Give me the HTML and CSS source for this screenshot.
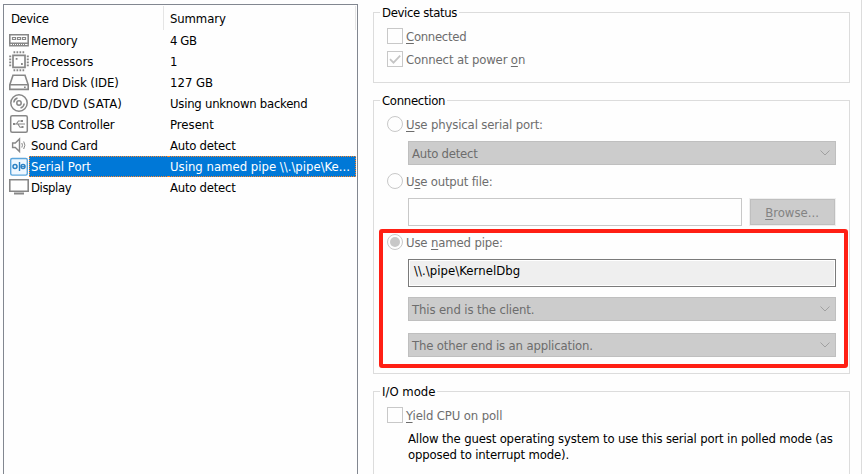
FILE: index.html
```html
<!DOCTYPE html>
<html lang="en">
<head>
<meta charset="utf-8">
<title>Virtual Machine Settings</title>
<link rel="stylesheet" href="styles.css">
</head>
<body>
<main class="dialog">
  <section class="devices">
    <div class="head"><span class="col-device tight-4">Device</span><span class="col-summary tight-1">Summary</span></div>
    <div class="row">
      <svg class="icon" viewBox="0 0 20 21" fill="none" stroke="#878787"><path d="M.8 4.8h18.4v8.4H.8z" stroke-width="1.6"/><path d="M3.5 7.5h3v2h-3zM8.5 7.5h3v2h-3zM13.5 7.5h3v2h-3z" stroke-width="1.2"/><path d="M.8 13v2.8h18.4V13" stroke-width="1.4"/><path d="M3 14.3h14" stroke-dasharray="1 1" stroke-width="1.6"/></svg>
      <span class="name tight-2">Memory</span><span class="summary tight-4">4 GB</span></div>
    <div class="row">
      <svg class="icon" viewBox="0 0 20 21" fill="none" stroke="#878787"><path d="M4 4.3h12v12H4z" stroke-width="1.7"/><path d="M4.5 1.2h11.5M4.5 19.2h11.5" stroke-width="2" stroke-dasharray="1.7 1.3"/><path d="M1.2 4.5v11.5M18.8 4.5v11.5" stroke-width="2" stroke-dasharray="1.7 1.3"/><path d="M6.7 7.8h1.8M12 13h1.8" stroke-width="1.8"/></svg>
      <span class="name">Processors</span><span class="summary">1</span></div>
    <div class="row">
      <svg class="icon" viewBox="0 0 20 21" fill="none" stroke="#878787" stroke-width="1.6"><path d="M.8 12.8 4 3.3h12l3.2 9.5v4.6H.8zM.8 12.8h18.4"/><path d="M15 15.2h1.7"/></svg>
      <span class="name tight-1">Hard Disk (IDE)</span><span class="summary">127 GB</span></div>
    <div class="row">
      <svg class="icon" viewBox="0 0 20 21" fill="none" stroke="#878787" stroke-width="1.5"><circle cx="10" cy="10" r="8.2"/><circle cx="10" cy="10" r="2.2"/><path d="M4.8 9.5A5.2 5.2 0 0 1 8.5 5M15.2 10.5a5.2 5.2 0 0 1-3.7 4.5"/></svg>
      <span class="name loose">CD/DVD (SATA)</span><span class="summary tight-25">Using unknown backend</span></div>
    <div class="row">
      <svg class="icon" viewBox="0 0 20 21" fill="none" stroke="#878787"><rect x="1.7" y="1.7" width="16.6" height="16.6" rx="1.5" stroke-width="1.5"/><path d="M5 10h11M7.5 9.8 9.5 7h3M9 10.2l2 3h2" stroke-width="1.1"/><path d="M4 9h2v2H4zM12 6h2v2h-2zM12.5 12h2v2h-2z" fill="#878787" stroke="none"/></svg>
      <span class="name tight-1">USB Controller</span><span class="summary">Present</span></div>
    <div class="row">
      <svg class="icon" viewBox="0 0 20 21" fill="none" stroke="#878787"><path d="M3.6 8h2.7l4.2-4v12.5l-4.2-4H3.6z" stroke-width="1.4"/><path d="M12.8 8q1.3 2.3 0 4.5M14.7 6.5q2.4 3.7 0 7.5"/></svg>
      <span class="name tight-1">Sound Card</span><span class="summary tight-25">Auto detect</span></div>
    <div class="row selected">
      <svg class="icon" viewBox="0 0 20 21" fill="none" stroke="#2c82c4"><rect x="1.7" y="2.5" width="16.6" height="16.6" rx="1.5" fill="#eef7ff" stroke="#5ca6dc" stroke-width="1.4"/><circle cx="6" cy="10.5" r="2" stroke-width="1.5"/><path d="M10.5 6v9" stroke-width="1.4"/><circle cx="14" cy="10.5" r="2" stroke-width="1.5"/><path d="M12 10.6h4"/></svg>
      <span class="name">Serial Port</span><span class="summary">Using named pipe \\.\pipe\Ke...</span></div>
    <div class="row">
      <svg class="icon" viewBox="0 0 20 21" fill="none" stroke="#878787" stroke-width="1.6"><path d="M.8 2.8h18.4v11.4H.8z"/><path d="M5 16.5h10" stroke-width="2"/></svg>
      <span class="name tight-4">Display</span><span class="summary tight-25">Auto detect</span></div>
  </section>

  <section class="settings">
    <div class="group status">
      <h2 class="tight-35">Device status</h2>
      <div class="option"><i class="box"></i><span class="tight-3"><u>C</u>onnected</span></div>
      <div class="option"><i class="box"><svg viewBox="0 0 14 14"><path d="M2 7.2 5.5 10.7 12.2 3.6" fill="none" stroke="#c4c4c4" stroke-width="1.7"/></svg></i><span class="tight-15">Connect at power <u>o</u>n</span></div>
    </div>
    <div class="group connection">
      <h2 class="tight-3">Connection</h2>
      <div class="option"><i class="radio"></i><span class="tight-15"><u>U</u>se physical serial port:</span></div>
      <div class="combo physical"><span class="tight-25">Auto detect</span><svg viewBox="0 0 10 6"><path d="M.5.5 5 5 9.5.5"/></svg></div>
      <div class="option file"><i class="radio"></i><span class="tight-2">U<u>s</u>e output file:</span></div>
      <div class="file-line"><div class="input"></div><div class="browse"><span><u>B</u>rowse...</span></div></div>
      <div class="option pipe"><i class="radio on"></i><span class="tight-15">Use <u>n</u>amed pipe:</span></div>
      <div class="pipe-name"><span class="pipe-text">\\.\pipe\KernelDbg</span></div>
      <div class="combo"><span class="tight-1">This end is the client.</span><svg viewBox="0 0 10 6"><path d="M.5.5 5 5 9.5.5"/></svg></div>
      <div class="combo other"><span class="tight-15">The other end is an application.</span><svg viewBox="0 0 10 6"><path d="M.5.5 5 5 9.5.5"/></svg></div>
      <div class="highlight"></div>
    </div>
    <div class="group io">
      <h2>I/O mode</h2>
      <div class="option"><i class="box"></i><span class="tight-1"><u>Y</u>ield CPU on poll</span></div>
      <p>Allow the guest operating system to use this serial port in polled mode (as<br>opposed to interrupt mode).</p>
    </div>
  </section>
</main>
</body>
</html>
```
FILE: styles.css
```css
* { box-sizing: border-box; }
body { margin: 0; background: #fefefe; overflow: hidden; }
.dialog {
  display: flex; width: 862px; height: 474px; overflow: hidden;
  border-right: 1px solid #dcdcdc; padding-left: 3px;
  font: 13px/16px "DejaVu Sans Condensed", "DejaVu Sans", sans-serif;
  font-stretch: condensed; color: #000; white-space: nowrap;
}
.tight-1 { letter-spacing: -.12px; }
.tight-15 { letter-spacing: -.15px; }
.tight-2 { letter-spacing: -.2px; }
.tight-25 { letter-spacing: -.25px; }
.tight-3 { letter-spacing: -.3px; }
.tight-35 { letter-spacing: -.35px; }
.tight-4 { letter-spacing: -.42px; }
.loose { letter-spacing: .2px; }

.devices { width: 355px; height: 480px; margin-top: 4px; border: 1px solid #828790; flex: none; }
.head { display: flex; height: 24px; margin: 1px 1px 0 0; line-height: 26px; border-right: 1px solid #e5e5e5; }
.col-device { width: 160px; padding-left: 7px; border-right: 1px solid #e5e5e5; }
.col-summary { padding-left: 6px; }
.row { display: flex; height: 21px; line-height: 21px; padding-left: 5px; margin-right: 1px; }
.icon { width: 20px; height: 21px; flex: none; }
.name { width: 139px; padding-left: 2px; }
.summary { flex: 1; padding-left: 2px; }
.selected .name, .selected .summary { background: #0078d7; color: #fff; border: 1px dotted #ff8728; line-height: 19px; }
.selected .name { border-right: 0; padding-left: 2px; border-left-width: 1px; padding-left: 1px; }
.selected .summary { border-left: 0; }

.settings { width: 477px; margin-left: 15px; flex: none; }
.group { border: 1px solid #dcdcdc; padding-left: 13px; position: relative; }
.status { margin-top: 12px; height: 71px; }
.connection { margin-top: 17px; height: 274px; }
.io { margin-top: 17px; height: 100px; }
h2 { width: fit-content; height: 16px; margin: -8px 0 0 -7px; padding: 0 2px; background: #fefefe; font: inherit; }
.option { display: flex; height: 16px; line-height: 18px; margin-top: 7px; gap: 3px; color: #6d6d6d; }
.box { width: 16px; height: 16px; border: 1px solid #c8c8c8; display: block; }
.box svg { display: block; width: 14px; height: 14px; }
.radio { width: 16px; height: 16px; border: 1px solid #c8c8c8; border-radius: 50%; display: block; padding: 2px; }
.on::before { content: ""; display: block; width: 10px; height: 10px; border-radius: 50%; background: #c8c8c8; }
u { text-decoration-thickness: 1px; text-underline-offset: 2px; }
.combo {
  display: flex; align-items: center; justify-content: space-between;
  width: 428px; height: 24px; margin: 10px 0 0 21px; padding: 0 5px 0 3px;
  border: 1px solid #bfbfbf; background: #ccc; color: #6d6d6d;
}
.combo span { padding-top: 2px; }
.combo svg { width: 10px; height: 6px; fill: none; stroke: #a0a0a0; }
.connection .physical { margin-top: 9px; }
.connection .physical span { padding-top: 1px; }
.connection .file { margin-top: 8px; }
.connection .pipe { margin-top: 8px; }
.file-line { display: flex; margin: 9px 0 0 21px; gap: 7px; }
.input { width: 334px; height: 28px; border: 1px solid #c8c8c8; }
.browse { width: 87px; height: 28px; padding: 1px; background: #efefef; }
.browse span { display: block; height: 26px; line-height: 26px; border: 1px solid #bfbfbf; background: #ccc; color: #838383; text-align: center; }
.browse span { padding-right: 1px; }
.pipe-name { width: 428px; height: 28px; margin: 9px 0 0 21px; padding: 3px 5px; border: 1px solid #7a7a7a; background: #efefef; box-shadow: inset 0 0 0 1px #fff; }
.pipe-text { letter-spacing: .05px; }
.combo.other { margin-top: 12px; }
.highlight { position: absolute; left: 5px; top: 128px; width: 469px; height: 139px; border: 4px solid #ff1f14; border-radius: 3px; }
p { margin: 8px 0 0 21px; letter-spacing: -.165px; }
```
